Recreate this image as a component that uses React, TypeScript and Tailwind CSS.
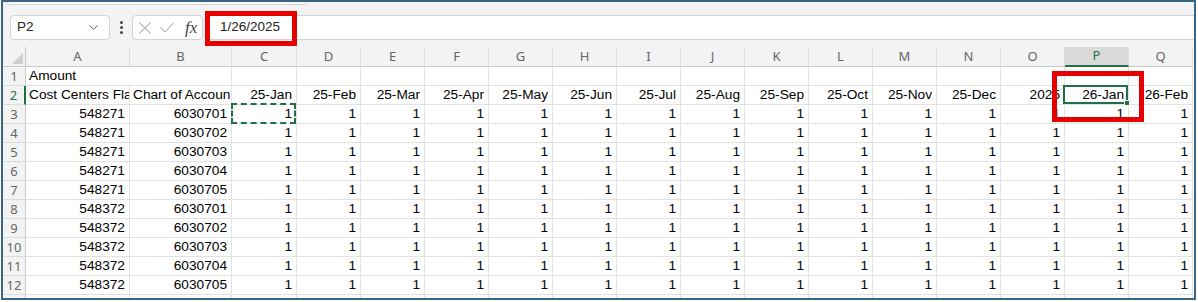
import { ChevronDown } from 'lucide-react';

const letters = ['A', 'B', 'C', 'D', 'E', 'F', 'G', 'H', 'I', 'J', 'K', 'L', 'M', 'N', 'O', 'P', 'Q'];
const widths = [104, 102, 65, 64, 64, 64, 64, 64, 64, 64, 64, 64, 64, 64, 64, 64, 64];

const row2 = [
  'Cost Centers Flat', 'Chart of Account', '25-Jan', '25-Feb', '25-Mar', '25-Apr', '25-May', '25-Jun',
  '25-Jul', '25-Aug', '25-Sep', '25-Oct', '25-Nov', '25-Dec', '2025', '26-Jan', '26-Feb',
];

const dataRows = [
  ['548271', '6030701'],
  ['548271', '6030702'],
  ['548271', '6030703'],
  ['548271', '6030704'],
  ['548271', '6030705'],
  ['548372', '6030701'],
  ['548372', '6030702'],
  ['548372', '6030703'],
  ['548372', '6030704'],
  ['548372', '6030705'],
];

function RowHead({ n, active }: { n: string; active?: boolean }) {
  return (
    <div
      className={`w-[23px] shrink-0 flex items-center justify-center pt-[1px] border-b border-[#dcdcdc] bg-[#f3f3f3] text-[13px] font-['Noto_Sans',sans-serif] ${
        active ? 'border-r-2 border-r-[#1e7145] text-[#1e7145] bg-[#e6e6e6]' : 'border-r border-r-[#c9c9c9] text-[#666]'
      }`}
    >
      {n}
    </div>
  );
}

function Cell({ w, text, align, children }: { w: number; text?: string; align?: 'l' | 'r'; children?: React.ReactNode }) {
  return (
    <div
      style={{ width: w }}
      className={`relative shrink-0 h-full border-r border-b border-[#e1e1e1] pt-[1px] flex items-center whitespace-nowrap text-[13.7px] text-black font-['Liberation_Sans',Arial,sans-serif] ${
        align === 'r' ? 'justify-end pr-[4px] pl-[3px]' : 'justify-start pl-[3px]'
      }`}
    >
      <span className={align === 'r' ? '' : 'overflow-hidden block w-full'}>{text}</span>
      {children}
    </div>
  );
}

export default function App() {
  return (
    <div className="w-[1198px] h-[302px] bg-white pl-[1px] overflow-hidden">
      <div className="w-[1195px] h-[300px] border-2 border-[#3a6683] bg-[#f3f3f3] flex flex-col overflow-hidden">
        {/* formula bar */}
        <div className="relative h-[45px] shrink-0 flex items-start pt-[13px]">
          <div className="absolute left-[4px] top-0 w-[300px] h-[3px] bg-white border-b border-x border-[#d6d6d6] rounded-b-[4px]" />
          <div className="ml-[7px] w-[100px] h-[25px] bg-white border border-[#d4d4d4] rounded-[4px] flex items-center justify-between pl-[6px] pr-[8px]">
            <span className="text-[13.5px] text-[#222] font-['Liberation_Sans',Arial,sans-serif]">P2</span>
            <ChevronDown size={15} strokeWidth={1.5} className="text-[#555]" />
          </div>
          <div className="w-[22px] h-[25px] flex flex-col items-center justify-center gap-[2px]">
            <span className="w-[3px] h-[3px] rounded-full bg-[#444]" />
            <span className="w-[3px] h-[3px] rounded-full bg-[#444]" />
            <span className="w-[3px] h-[3px] rounded-full bg-[#444]" />
          </div>
          <div className="w-[71px] h-[25px] bg-white border border-[#d4d4d4] rounded-[4px] flex items-center pl-[6px]">
            <svg width="12" height="12" viewBox="0 0 12 12" className="shrink-0">
              <path d="M0.5 0.5 L11.5 11.5 M11.5 0.5 L0.5 11.5" stroke="#b8b8b8" strokeWidth="1.1" fill="none" />
            </svg>
            <svg width="14" height="11" viewBox="0 0 14 11" className="ml-[9px] shrink-0">
              <path d="M0.5 5.5 L5 10 L13.5 0.8" stroke="#b8b8b8" strokeWidth="1.1" fill="none" />
            </svg>
            <span className="ml-[11px] text-[17px] leading-none italic text-[#444] font-['Liberation_Serif',serif]">fx</span>
          </div>
          <div className="relative ml-[2px] flex-1 h-[25px] bg-white border-y border-[#d4d4d4] flex items-center pl-[15px]">
            <span className="text-[13.5px] text-[#222] font-['Liberation_Sans',Arial,sans-serif]">1/26/2025</span>
            <div className="absolute left-0 top-[-5px] w-[92px] h-[35px] border-[5px] border-[#e60000]" />
          </div>
        </div>

        {/* grid */}
        <div className="flex-1 bg-white overflow-hidden">
          {/* column headers */}
          <div className="flex h-[20px]">
            <div className="relative w-[23px] shrink-0 border-r border-b border-[#c9c9c9] bg-[#f3f3f3]">
              <svg className="absolute right-[2px] bottom-[2px]" width="11" height="11" viewBox="0 0 11 11">
                <path d="M11 0 L11 11 L0 11 Z" fill="#d0d0d0" />
              </svg>
            </div>
            {letters.map((l, i) => (
              <div
                key={l}
                style={{ width: widths[i] }}
                className={`shrink-0 flex items-center justify-center border-r border-[#dcdcdc] text-[13px] font-['Noto_Sans',sans-serif] ${
                  l === 'P'
                    ? 'bg-[#d9d9d9] text-[#1e7145] border-b-2 border-b-[#1e7145]'
                    : 'bg-[#f3f3f3] text-[#666] border-b border-b-[#c9c9c9]'
                }`}
              >
                {l}
              </div>
            ))}
          </div>

          {/* row 1 */}
          <div className="flex h-[19px]">
            <RowHead n="1" />
            <div style={{ width: widths[0] }} className="shrink-0 h-full border-b border-[#e1e1e1] pl-[3px] pt-[1px] flex items-center whitespace-nowrap text-[13.7px] text-black font-['Liberation_Sans',Arial,sans-serif]">
              Amount
            </div>
            {widths.slice(1).map((w, i) => (
              <Cell key={i} w={w} />
            ))}
          </div>

          {/* row 2 */}
          <div className="flex h-[19px]">
            <RowHead n="2" active />
            {row2.map((t, i) => (
              <Cell key={i} w={widths[i]} text={t} align={i < 2 ? 'l' : 'r'}>
                {i === 15 && (
                  <>
                    <div className="absolute left-[-2px] top-[-1px] right-0 bottom-0 border-2 border-[#1e7145] z-10">
                      <div className="absolute right-[-4px] bottom-[-4px] w-[6px] h-[6px] bg-[#1e7145] border border-white" />
                    </div>
                    <div className="absolute left-[-13px] top-[-15px] w-[92px] h-[51px] border-[5px] border-[#e60000] z-20" />
                  </>
                )}
              </Cell>
            ))}
          </div>

          {/* data rows */}
          {dataRows.map((r, ri) => (
            <div key={ri} className="flex h-[19px]">
              <RowHead n={String(ri + 3)} />
              <Cell w={widths[0]} text={r[0]} align="r" />
              <Cell w={widths[1]} text={r[1]} align="r" />
              {widths.slice(2).map((w, ci) => (
                <Cell key={ci} w={w} text="1" align="r">
                  {ri === 0 && ci === 0 && (
                    <div className="absolute left-[-1px] top-[-2px] right-0 bottom-[-1px] border-2 border-dashed border-[#1e7145]" />
                  )}
                </Cell>
              ))}
            </div>
          ))}

          {/* partial row 13 */}
          <div className="flex h-[19px]">
            <RowHead n="" />
            {widths.map((w, i) => (
              <Cell key={i} w={w} />
            ))}
          </div>
        </div>
      </div>
    </div>
  );
}
